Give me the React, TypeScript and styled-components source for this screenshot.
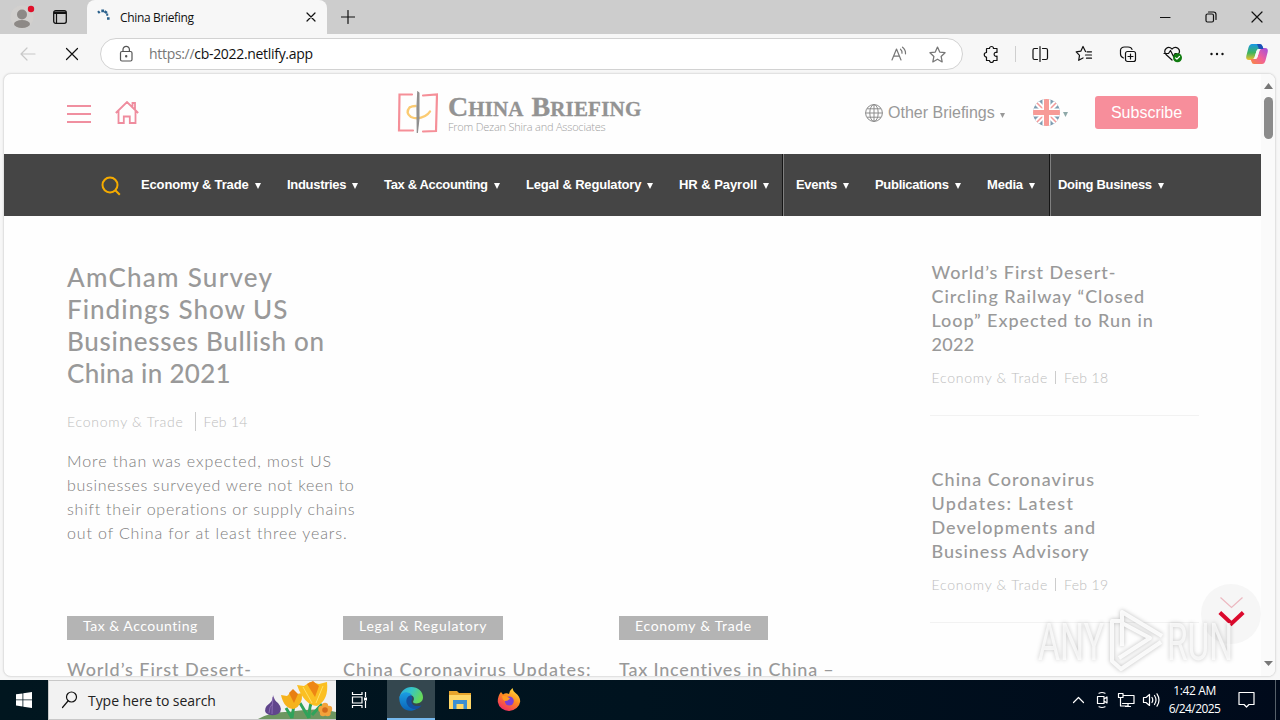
import React from "react";
import styled, { createGlobalStyle } from "styled-components";

const GlobalStyle = createGlobalStyle`
  * { box-sizing: border-box; }
  body { margin: 0; overflow: hidden; background: #f7f7f7; }
`;

const ui = `"Open Sans", "Noto Sans", sans-serif`;
const arial = `"Liberation Sans", Arial, sans-serif`;
const brown = `Lato, "Open Sans", sans-serif`;

const Screen = styled.div`
  position: relative;
  width: 1280px;
  height: 720px;
  display: flex;
  flex-direction: column;
  overflow: hidden;
  font-family: ${ui};
  color: #111;
  svg { display: block; flex: none; }
`;
const Line = styled.span<{ $track?: number }>`
  display: block;
  white-space: nowrap;
  letter-spacing: ${(p) => p.$track ?? 0}px;
`;

/* Browser frame */
const TabStrip = styled.header`
  height: 34px;
  flex: none;
  display: flex;
  background: #cdcdcd;
`;
const TabActions = styled.div`
  width: 87px;
  display: flex;
  align-items: center;
  gap: 18px;
  padding-left: 10px;
`;
const Tab = styled.div`
  width: 240px;
  display: flex;
  align-items: center;
  padding: 0 9px;
  background: #f7f7f7;
  border-radius: 8px 8px 0 0;
  font-size: 12px;
`;
const TabTitle = styled(Line)`
  flex: 1;
  padding-left: 8px;
`;
const NewTab = styled.div`
  display: flex;
  align-items: center;
  padding-left: 14px;
  flex: 1;
`;
const WindowButtons = styled.div`
  display: flex;
  align-items: center;
  gap: 34px;
  padding-right: 17px;
`;
const Toolbar = styled.div`
  height: 39px;
  flex: none;
  display: flex;
  align-items: center;
  padding: 1px 10px 0 18px;
  background: #f7f7f7;
`;
const NavButtons = styled.div`
  width: 82px;
  flex: none;
  display: flex;
  gap: 25px;
`;
const AddressBar = styled.div`
  width: 863px;
  flex: none;
  height: 32px;
  display: flex;
  align-items: center;
  padding: 0 16px 0 17px;
  background: #fff;
  border: 1px solid #d2d2d2;
  border-radius: 16px;
`;
const Url = styled(Line)`
  flex: 1;
  padding-left: 14px;
  font-size: 14px;
  line-height: 18px;
  color: #111;
`;
const Scheme = styled.span`
  color: #777;
`;
const AddressIcons = styled.div`
  display: flex;
  align-items: center;
  gap: 21px;
`;
const Tools = styled.div`
  flex: 1;
  min-width: 0;
  display: flex;
  align-items: center;
  gap: 26px;
  padding-left: 18px;
`;
const ToolDivider = styled.i`
  width: 1px;
  flex: none;
  height: 16px;
  margin: 0 -11px 0 -12px;
  background: #cfcfcf;
`;
const Copilot = styled.div`
  margin-left: -6px;
`;

/* Web page */
const Viewport = styled.main`
  width: 1273px;
  height: 604px;
  margin-left: 3px;
  flex: none;
  display: flex;
  overflow: hidden;
  background: #fefefe;
  border: 1px solid #e2e2e2;
  border-radius: 8px;
  box-shadow: 0 0 2px rgba(0, 0, 0, 0.1);
`;
const Page = styled.div`
  width: 1257px;
  flex: none;
`;
const SiteHeader = styled.div`
  height: 80px;
  display: flex;
  align-items: center;
  padding-left: 63px;
  font-family: ${arial};
`;
const MenuIcons = styled.div`
  width: 330px;
  display: flex;
  align-items: center;
  gap: 24px;
  padding-bottom: 2px;
`;
const Logo = styled.div`
  width: 468px;
  display: flex;
  gap: 10px;
  padding-bottom: 3px;
`;
const LogoText = styled.div`
  padding-top: 2px;
`;
const LogoName = styled.div`
  display: flex;
  gap: 8px;
  height: 27px;
  font: bold 21px/27px "Liberation Serif", "Times New Roman", serif;
  color: #939393;
  -webkit-text-stroke: 0.3px #939393;
`;
const Cap = styled.span`
  font-size: 28px;
  letter-spacing: 0;
`;
const LogoTag = styled(Line)`
  font: 300 11px/14px ${ui};
  color: #a0a0a0;
`;
const HeaderTools = styled.div`
  display: flex;
  align-items: center;
  padding-bottom: 3px;
`;
const Briefings = styled.div`
  width: 168px;
  display: flex;
  align-items: center;
  gap: 5px;
  font-size: 16px;
  color: #999;
`;
const Language = styled.div`
  width: 62px;
  display: flex;
  align-items: center;
  gap: 3px;
`;
const Subscribe = styled.button`
  width: 103px;
  height: 33px;
  padding: 0;
  border: 0;
  border-radius: 3px;
  background: #f78e9b;
  color: #fff;
  font: 16px ${arial};
`;
const NavBar = styled.nav`
  height: 62px;
  display: flex;
  padding-left: 97px;
  background: #454545;
  color: #fff;
  font: bold 13px ${arial};
`;
const SearchSlot = styled.div`
  width: 40px;
  padding-top: 22px;
`;
const NavItem = styled.div<{ $w: number }>`
  width: ${(p) => p.$w}px;
  display: flex;
  align-items: center;
  gap: 6px;
  height: 60px;
`;
const NavDivider = styled.i<{ $after: number }>`
  width: 2px;
  margin-right: ${(p) => p.$after}px;
  background: #151515;
  border-right: 1px solid #808080;
`;
const Content = styled.div`
  display: flex;
  padding: 45px 0 0 63px;
  font-family: ${brown};
`;
const MainColumn = styled.div`
  width: 863px;
`;
const Headline = styled.h1`
  margin: 0;
  font-size: 26px;
  line-height: 32px;
  font-weight: 500;
  color: #999;
`;
const Meta = styled.div`
  display: flex;
  align-items: center;
  height: 20px;
  font-size: 14px;
  font-weight: 300;
  color: #bdbdbd;
`;
const MetaBar = styled.i<{ $h: number; $gap: number }>`
  width: 1px;
  height: ${(p) => p.$h}px;
  margin: 0 8px 0 ${(p) => p.$gap}px;
  background: #ccc;
`;
const LeadMeta = styled.div`
  margin: 22px 0 18px;
`;
const Summary = styled.p`
  margin: 0;
  font-size: 16px;
  line-height: 24px;
  font-weight: 300;
  color: #7c7c7c;
`;
const Cards = styled.div`
  display: flex;
  margin-top: 71px;
`;
const Card = styled.article`
  width: 276px;
`;
const Tag = styled.div<{ $w: number }>`
  width: ${(p) => p.$w}px;
  height: 24px;
  padding-left: 16px;
  margin-bottom: 17px;
  background: #b4b4b4;
  color: #fff;
  font-size: 14px;
  line-height: 20px;
`;
const Title = styled.h2`
  margin: 0;
  padding-left: 1.5px;
  font-size: 18px;
  line-height: 24px;
  font-weight: 500;
  color: #999;
`;
const CardTitle = styled(Title)`
  padding-left: 0;
`;
const SideColumn = styled.aside`
  width: 269px;
  margin-top: -1px;
`;
const SideStory = styled.article`
  height: 156px;
  margin-bottom: 51px;
  border-bottom: 1px solid #f2f2f2;
`;
const SideMeta = styled.div`
  padding: 11px 0 0 1.5px;
`;
const Scrollbar = styled.div`
  width: 15px;
  flex: none;
  display: flex;
  flex-direction: column;
  align-items: center;
  justify-content: space-between;
  padding: 9px 0 10px;
  background: #fafafa;
`;
const Thumb = styled.div`
  width: 9px;
  height: 42px;
  margin: 8px 0 auto;
  border-radius: 5px;
  background: #8b8b8b;
`;

/* Overlays */
const ScrollHint = styled.div`
  position: absolute;
  left: 1201px;
  top: 584px;
  width: 60px;
  height: 60px;
  padding: 10px 0 0 16px;
  border-radius: 50%;
  background: #f6f6f6;
`;
const Watermark = styled.div`
  position: absolute;
  left: 1030px;
  top: 602px;
  filter: drop-shadow(0 0 2px rgba(0, 0, 0, 0.3));
`;

/* Taskbar */
const Taskbar = styled.footer`
  height: 40px;
  margin-top: auto;
  flex: none;
  display: flex;
  background: linear-gradient(90deg, #01161f, #00131f 50%, #000a1b);
  color: #fff;
`;
const TaskButton = styled.div<{ $active?: boolean }>`
  width: 48px;
  display: flex;
  align-items: center;
  justify-content: center;
  background: ${(p) => (p.$active ? "#34474f" : "transparent")};
  border-bottom: ${(p) => (p.$active ? "2px solid #76b9ed" : "0")};
`;
const PinnedApps = styled.div`
  display: flex;
  gap: 1px;
  padding-left: 3px;
`;
const SearchBox = styled.div`
  width: 288px;
  display: flex;
  align-items: center;
  padding-left: 12px;
  background: #f2f2f2;
  border: 1px solid #c8c8c8;
  border-width: 1px 0 1px 1px;
  color: #222;
  font-size: 14px;
`;
const SearchLabel = styled(Line)`
  flex: 1;
  padding-left: 10px;
`;
const Tray = styled.div`
  margin-left: auto;
  display: flex;
  align-items: center;
`;
const TrayIcons = styled.div`
  display: flex;
  align-items: center;
  gap: 7px;
  padding-right: 8px;
  margin-left: 1px;
`;
const Clock = styled.div`
  width: 53px;
  display: flex;
  flex-direction: column;
  align-items: center;
  font-size: 12px;
  line-height: 18px;
`;
const Notify = styled.div`
  width: 54px;
  height: 100%;
  padding: 11px 0 0 17px;
`;
const DesktopEdge = styled.i`
  width: 5px;
  height: 100%;
  border-left: 1px solid #56606a;
`;

const Caret = ({ s = 6, c = "#fff", drop = 4 }: { s?: number; c?: string; drop?: number }) => (
  <svg width={s} height={s + drop} viewBox={`0 0 ${s} ${s + drop}`} fill={c}>
    <path d={`M0 ${drop}h${s}L${s / 2} ${drop + s}z`} />
  </svg>
);

const stroke = { fill: "none", stroke: "#111", strokeWidth: 1.2, strokeLinecap: "round", strokeLinejoin: "round" } as const;

const starPath = "M8 1l2.1 4.7 5 .6-3.7 3.5 1 5.2L8 12.4 3.600 15l1-5.200L.9 6.300l5-.6z";

function BrowserTop() {
  return (
    <>
      <TabStrip>
        <TabActions>
          <svg width="25" height="24" viewBox="0 0 25 24">
            <circle cx="12" cy="12" r="11.500" fill="#d2d0ce" />
            <circle cx="12" cy="9.500" r="5" fill="#8d8986" />
            <ellipse cx="12" cy="19" rx="8" ry="4" fill="#8d8986" />
            <circle cx="21" cy="4" r="3.200" fill="#e0102a" />
          </svg>
          <svg width="14" height="14" viewBox="0 0 14 14">
            <rect x=".7" y=".7" width="12.600" height="12.600" rx="2" fill="none" stroke="#111" strokeWidth="1.300" />
            <path d="M1 1.500h12V4H1z" fill="#111" />
            <path d="M3.500 4v9" stroke="#111" strokeWidth="1.200" />
          </svg>
        </TabActions>
        <Tab>
          <svg width="16" height="16" viewBox="0 0 16 16" fill="none" stroke="#2b618c" strokeWidth="2.600">
            <path d="M2 3.800l1.700-1.400M5.300 1.900h2.800M8.500 2.200l2.400 1.900" />
            <path d="M10.200 5.600h2M11 9.500h2.600" strokeWidth="2.400" />
          </svg>
          <TabTitle $track={-0.34}>China Briefing</TabTitle>
          <svg width="14" height="14" viewBox="0 0 14 14" {...stroke}><path d="M3 3l8 8M11 3l-8 8" /></svg>
        </Tab>
        <NewTab>
          <svg width="14" height="14" viewBox="0 0 14 14" {...stroke}><path d="M7 .5v13M.5 7h13" /></svg>
        </NewTab>
        <WindowButtons>
          <svg width="11" height="11" viewBox="0 0 11 11" {...stroke}><path d="M0 5.500h10" /></svg>
          <svg width="12" height="12" viewBox="0 0 12 12" {...stroke}>
            <rect x="1" y="3" width="7.500" height="8" rx="1.500" /><path d="M3.500 1H8.500q2.500 0 2.500 2.500V8.500" />
          </svg>
          <svg width="12" height="12" viewBox="0 0 12 12" {...stroke}><path d="M1 1l10 10M11 1L1 11" /></svg>
        </WindowButtons>
      </TabStrip>
      <Toolbar>
        <NavButtons>
          <svg width="20" height="16" viewBox="0 0 20 16" {...stroke} stroke="#c8c8c8"><path d="M3 8h14M9 2L3 8l6 6" /></svg>
          <svg width="18" height="16" viewBox="0 0 18 16" {...stroke}><path d="M3.500 2.500l11 11M14.500 2.500l-11 11" /></svg>
        </NavButtons>
        <AddressBar>
          <svg width="17" height="18" viewBox="0 0 17 18" {...stroke} stroke="#555">
            <rect x="2.500" y="6.500" width="11.500" height="9.500" rx="1.500" /><path d="M5 6V4.500a3.200 3.200 0 016.400 0V6" />
            <circle cx="8.200" cy="11.200" r=".6" fill="#555" />
          </svg>
          <Url $track={-0.31}><Scheme>https://</Scheme>cb-2022.netlify.app</Url>
          <AddressIcons>
            <svg width="18" height="16" viewBox="0 0 18 16" {...stroke} stroke="#777">
              <path d="M2 14L6.500 3 11 14M3.500 10.200h6M10.500 3.200q1.800 1.600 1.500 4M12.500 1.200q3.300 2.600 3 6.600" />
            </svg>
            <svg width="17" height="17" viewBox="0 0 16 16" {...stroke} stroke="#777"><path d={starPath} /></svg>
          </AddressIcons>
        </AddressBar>
        <Tools>
          <svg width="20" height="18" viewBox="0 0 20 18" {...stroke}>
            <path d="M6 3.500h2.500a2 2 0 014 0H16V7.500a2 2 0 100 3.600V15.500H12.500a2 2 0 01-4 0H5.500V12a2.200 2.200 0 110-4.500V4z" />
          </svg>
          <ToolDivider />
          <svg width="18" height="18" viewBox="0 0 18 18" {...stroke}>
            <path d="M6.500 3.500H3.500a1.500 1.500 0 00-1.500 1.500v8a1.500 1.500 0 001.500 1.500H6.500M11.500 3.500H15a1.500 1.500 0 011.500 1.500v8a1.500 1.500 0 01-1.500 1.500H11.500M9 1.500v15" />
          </svg>
          <svg width="18" height="18" viewBox="0 0 18 18" {...stroke}>
            <path d="M10.500 6.500L8 1.500 5.800 6.200 1.200 6.800l3.300 3.500-.8 5L8 12.900M12 6.800h4.500M10.500 10h6M11.500 13.200h5" />
          </svg>
          <svg width="18" height="18" viewBox="0 0 18 18" {...stroke}>
            <rect x="6.500" y="6.500" width="10" height="10" rx="2" /><path d="M11.500 9v5M9 11.500h5M4.500 13Q1.500 12 1.500 9V5q.5-3 4-3H9q3.500 0 4 2.500" />
          </svg>
          <svg width="20" height="18" viewBox="0 0 20 18" {...stroke}>
            <path d="M9 15L3 9.500C-.5 5 5 0 9 4c4-4 9.500.5 6.500 5M1 8.500h4.500l2-3 3 6 1.500-3h2" />
            <circle cx="14.500" cy="12.700" r="4.500" fill="#107c10" stroke="none" /><path d="M12.500 12.800l1.400 1.400 2.600-2.700" stroke="#fff" />
          </svg>
          <svg width="16" height="4" viewBox="0 0 16 4" fill="#111"><circle cx="2.500" cy="2" r="1.200" /><circle cx="8" cy="2" r="1.200" /><circle cx="13.500" cy="2" r="1.200" /></svg>
          <Copilot>
            <svg width="24" height="24" viewBox="0 0 24 24">
              <defs>
                <linearGradient id="cpA" x1="0" y1="0" x2="0" y2="1"><stop stopColor="#1798e8" /><stop offset=".55" stopColor="#3fb45c" /><stop offset="1" stopColor="#f3c02e" /></linearGradient>
                <linearGradient id="cpB" x1="1" y1="0" x2="0" y2="1"><stop stopColor="#a04fe0" /><stop offset=".5" stopColor="#f0609a" /><stop offset="1" stopColor="#fa8a3c" /></linearGradient>
              </defs>
              <path d="M7 2h8q2 0 2.600 2.500L18.500 7H14q-2 0-2.500 2L9.500 15.500Q9 18 6.500 18H4Q.5 18 1.300 14L3.500 5.500Q4.500 2 7 2z" fill="url(#cpA)" />
              <path d="M17 22H9q-2 0-2.600-2.500L5.500 17H10q2 0 2.500-2l2-6.500Q15 6 17.500 6H20q3.500 0 2.700 4l-2.200 8.500Q19.500 22 17 22z" fill="url(#cpB)" />
              <path d="M11.500 9q.5-2 2.500-2h2.300q-1.200.3-1.800 1.500l-2 6.500q-.5 2-2.500 2H7.700q1.300-.3 1.800-1.500z" fill="#f7f7f7" />
              <path d="M12 2h3q2 0 2.600 2.500L18.500 7H14z" fill="#1d4fb8" />
            </svg>
          </Copilot>
        </Tools>
      </Toolbar>
    </>
  );
}

const navGroups: [string, number, number][][] = [
  [["Economy & Trade", 146, -0.15], ["Industries", 97, -0.3], ["Tax & Accounting", 142, -0.34], ["Legal & Regulatory", 153, -0.18], ["HR & Payroll", 103, -0.05]],
  [["Events", 79, -0.3], ["Publications", 112, -0.3], ["Media", 62, -0.2]],
  [["Doing Business", 120, -0.32]],
];

function Header() {
  return (
    <>
      <SiteHeader>
        <MenuIcons>
          <svg width="24" height="20" viewBox="0 -1 24 20" stroke="#f08fa0" strokeWidth="2"><path d="M0 2h24M0 10h24M0 18h24" /></svg>
          <svg width="24" height="24" viewBox="0 .5 24 24" fill="none" stroke="#ef8c9e" strokeWidth="1.800">
            <path d="M.8 12.500L12 1.500l11.200 11M3.500 10v12.500h5.300V16h6v6.500h5.700V10M17.500 6V2.500h2.500V9" />
          </svg>
        </MenuIcons>
        <Logo>
          <svg width="41" height="44" viewBox="-1 0 41 44" fill="none" strokeLinecap="round">
            <path d="M14 3.500H1.500L1 39.500h14M25 4.500l14-1-1 36.500-13 .5" stroke="#f58f98" strokeWidth="2.200" />
            <path d="M11.500 16.500Q7 22 13 26 20 29 27 25q3.500-2 5-4.500M11.500 16.500q2.500-1.500 6-1.500" stroke="#fbcb72" strokeWidth="2.400" />
            <path d="M19.800 1l-.8 15 .3 26 1.600-14V2z" stroke="#8e8e8e" strokeWidth="1.200" fill="#8e8e8e" />
          </svg>
          <LogoText>
            <LogoName><Line $track={0.1}><Cap>C</Cap>HINA</Line><Line $track={0.2}><Cap>B</Cap>RIEFING</Line></LogoName>
            <LogoTag $track={-0.22}>From Dezan Shira and Associates</LogoTag>
          </LogoText>
        </Logo>
        <HeaderTools>
          <Briefings>
            <svg width="18" height="18" viewBox="0 0 18 18" fill="none" stroke="#8c8c8c" strokeWidth="1">
              <circle cx="9" cy="9" r="8.400" /><ellipse cx="9" cy="9" rx="4.200" ry="8.400" /><path d="M9 .6v16.800M.6 9h16.800M2 4.800h14M2 13.200h14" />
            </svg>
            <Line>Other Briefings</Line>
            <Caret s={5} c="#999" drop={6} />
          </Briefings>
          <Language>
            <svg width="27" height="27" viewBox="0 0 27 27">
              <defs><clipPath id="flag"><circle cx="13.500" cy="13.500" r="13.500" /></clipPath></defs>
              <g clipPath="url(#flag)">
                <path fill="#7f9db2" d="M0 0h27v27H0z" />
                <path d="M0 0l27 27M27 0L0 27" stroke="#fff" strokeWidth="5.500" /><path d="M0 0l27 27M27 0L0 27" stroke="#f59a9a" strokeWidth="1.500" />
                <path d="M13.500 0v27M0 13.500h27" stroke="#fff" strokeWidth="8" /><path d="M13.500 0v27M0 13.500h27" stroke="#f79a96" strokeWidth="5" />
              </g>
            </svg>
            <Caret s={5} c="#8fa9a9" drop={3} />
          </Language>
          <Subscribe>Subscribe</Subscribe>
        </HeaderTools>
      </SiteHeader>
      <NavBar>
        <SearchSlot>
          <svg width="20" height="20" viewBox="0 0 20 20" fill="none" stroke="#f5ab00" strokeWidth="2"><circle cx="9" cy="9" r="7.500" /><path d="M14.300 14.300l4.500 4.500" /></svg>
        </SearchSlot>
        {navGroups.map((group, g) => (
          <React.Fragment key={g}>
            {g > 0 && <NavDivider $after={g === 1 ? 12 : 7} />}
            {group.map(([label, w, track]) => (
              <NavItem key={label} $w={w}><Line $track={track}>{label}</Line><Caret /></NavItem>
            ))}
          </React.Fragment>
        ))}
      </NavBar>
    </>
  );
}

const lead: [string, number][] = [["AmCham Survey", 1.27], ["Findings Show US", 1], ["Businesses Bullish on", 0.7], ["China in 2021", 0.3]];
const summary: [string, number][] = [
  ["More than was expected, most US", 0.92], ["businesses surveyed were not keen to", 0.72],
  ["shift their operations or supply chains", 0.78], ["out of China for at least three years.", 0.87],
];
const cards: [string, number, number, string, number][] = [
  ["Tax & Accounting", 147, 0.51, "World’s First Desert-", 0.95],
  ["Legal & Regulatory", 160, 0.74, "China Coronavirus Updates:", 1.07],
  ["Economy & Trade", 149, 0.67, "Tax Incentives in China –", 0.8],
];
const side: { lines: [string, number][]; date: string }[] = [
  { lines: [["World’s First Desert-", 0.95], ["Circling Railway “Closed", 0.99], ["Loop” Expected to Run in", 0.94], ["2022", 0.3]], date: "Feb 18" },
  { lines: [["China Coronavirus", 1.05], ["Updates: Latest", 1.28], ["Developments and", 1], ["Business Advisory", 0.89]], date: "Feb 19" },
];

function News() {
  return (
    <Content>
      <MainColumn>
        <Headline>{lead.map(([t, k]) => <Line key={t} $track={k}>{t}</Line>)}</Headline>
        <LeadMeta>
          <Meta><Line $track={0.75}>Economy &amp; Trade</Line><MetaBar $h={19} $gap={11} /><Line $track={0.3}>Feb 14</Line></Meta>
        </LeadMeta>
        <Summary>{summary.map(([t, k]) => <Line key={t} $track={k}>{t}</Line>)}</Summary>
        <Cards>
          {cards.map(([tag, w, tk, title, k]) => (
            <Card key={tag}><Tag $w={w}><Line $track={tk}>{tag}</Line></Tag><CardTitle><Line $track={k}>{title}</Line></CardTitle></Card>
          ))}
        </Cards>
      </MainColumn>
      <SideColumn>
        {side.map((s) => (
          <SideStory key={s.date}>
            <Title>{s.lines.map(([t, k]) => <Line key={t} $track={k}>{t}</Line>)}</Title>
            <SideMeta><Meta><Line $track={0.75}>Economy &amp; Trade</Line><MetaBar $h={13} $gap={7} /><Line $track={0.33}>{s.date}</Line></Meta></SideMeta>
          </SideStory>
        ))}
      </SideColumn>
    </Content>
  );
}

function Tulips() {
  return (
    <svg width="78" height="38" viewBox="0 0 78 38">
      <path d="M0 38Q14 30 30 31q30-5 48 0v7z" fill="#6d9660" />
      <path d="M34 37l-6-10M34 37q2-14 3-18M51 37q0-14 5-20M51 37L42 22M54 34l10-11" stroke="#2fa35a" strokeWidth="3" fill="none" />
      <path d="M15 14q1 5 5 8 6 7 0 11-7 3-12-1-3-5 4-10 3-3 3-8z" fill="#60458c" /><path d="M15 16q-1 10-1 17M15 22q-4 4-4 10" stroke="#8a6cb2" fill="none" />
      <path d="M23 14l6 1 5-5 5 3 5-1q1 12-8 16-10 0-13-14z" fill="#f6b21c" /><path d="M31 12l4-4 5 5-4 9z" fill="#e87f12" />
      <path d="M39 4l7 1 6-4 9 2 8-2q2 18-10 24-13-1-20-21z" fill="#fbbf22" /><path d="M49 3l6-3 6 5-4 11z" fill="#ee8614" /><path d="M45 6l9 16M65 5l-7 17" stroke="#ffe066" fill="none" />
      <circle cx="67" cy="25" r="3.200" fill="#f2a23a" /><circle cx="63.500" cy="28" r="3.200" fill="#f2a23a" /><circle cx="71" cy="28" r="3.200" fill="#f2a23a" /><circle cx="65" cy="32" r="3.200" fill="#f2a23a" /><circle cx="69.500" cy="32" r="3.200" fill="#f2a23a" />
      <circle cx="67" cy="29" r="2.800" fill="#d36b1a" />
    </svg>
  );
}

function Bottom() {
  const tray = { ...stroke, stroke: "#fff" };
  return (
    <Taskbar>
      <TaskButton>
        <svg width="16" height="16" viewBox="0 0 16 16" fill="#fff"><path d="M0 2.300L6.500 1.400V7.500H0zM7.300 1.300L16 0v7.500H7.300zM0 8.300h6.500v6.200L0 13.600zM7.300 8.300H16V16l-8.700-1.300z" /></svg>
      </TaskButton>
      <SearchBox>
        <svg width="17" height="18" viewBox="0 0 17 18" {...stroke}><circle cx="10.500" cy="6" r="5" /><path d="M7 10l-5.500 6.500" /></svg>
        <SearchLabel $track={-0.05}>Type here to search</SearchLabel>
        <Tulips />
      </SearchBox>
      <TaskButton>
        <svg width="18" height="16" viewBox="0 0 18 16" fill="none" stroke="#fff" strokeWidth="1.200">
          <path d="M1.500 0v2.500h9.500V0M1.500 5h9.500v6H1.500zM1.500 16v-2.500h9.500V16M14.500 0v5M14.500 9v7" /><path d="M13 5.500h3v3h-3z" fill="#fff" stroke="none" />
        </svg>
      </TaskButton>
      <PinnedApps>
        <TaskButton $active>
          <svg width="24" height="24" viewBox="0 0 24 24">
            <defs>
              <linearGradient id="eTop" x1="0" y1="0" x2="1" y2=".4"><stop stopColor="#2aa6df" /><stop offset=".5" stopColor="#35c5c8" /><stop offset="1" stopColor="#66d95a" /></linearGradient>
              <linearGradient id="eLow" x1="0" y1="0" x2="0" y2="1"><stop stopColor="#1b9de2" /><stop offset="1" stopColor="#0b63b8" /></linearGradient>
            </defs>
            <path d="M.5 11C1.500 4 6.500 0 12.300 0 19 0 24 4.800 24 10.300c0 4-3 6.200-6.500 6.200-3 0-4-1.500-3.200-2.500 1.400-2 .7-5.800-3.500-6C6 7.500 1.500 8.500.5 11z" fill="url(#eTop)" />
            <path d="M.3 12C0 7 4.800 4.800 8.500 5.500c3 .5 4.500 2.500 4.500 2.500-3 .5-5 3.500-4.500 7 .6 5 5.500 7 9 6.700C12 26 1 24 .3 12z" fill="url(#eLow)" />
            <path d="M11.200 8.500c-3.500 1-4.700 5-3.200 8.500 1.700 4 6 5.700 9.500 5 2.500-.6 4-2 5-3.800-3.500 1.600-8 .9-9.500-1.800-1.200-2-.3-3.600.3-4.600.3-1.600-.5-3-2.100-3.300z" fill="#1450a0" />
          </svg>
        </TaskButton>
        <TaskButton>
          <svg width="22" height="20" viewBox="0 0 22 20"><path d="M0 1h8l2 2h12v16H0z" fill="#e8a52c" /><path d="M0 5h22v14H0z" fill="#ffd768" /><path d="M4 10h14v9h-3.500v-5h-7v5H4z" fill="#3b8fd4" /></svg>
        </TaskButton>
        <TaskButton>
          <svg width="24" height="24" viewBox="0 0 24 24">
            <defs><linearGradient id="ff" x1=".8" y1="0" x2=".2" y2="1"><stop stopColor="#ffe23d" /><stop offset=".45" stopColor="#ff8a1e" /><stop offset="1" stopColor="#f0256a" /></linearGradient></defs>
            <path d="M4 4l2 2.500Q9 4.500 12 6q1-4 3.500-6 .5 3.500 3 5 4.500 3 4.700 8.500A11.300 10.500 0 01.8 14Q.6 8 4 4z" fill="url(#ff)" />
            <circle cx="12.300" cy="13" r="4.500" fill="#7a3fd6" /><path d="M5 8q4-.8 8 2.500-2.500 3-5.500 2.500Q5 11 5 8z" fill="#ff9a20" />
          </svg>
        </TaskButton>
      </PinnedApps>
      <Tray>
        <TrayIcons>
          <svg width="15" height="16" viewBox="0 0 15 16" {...tray}><path d="M2.500 10.500l5-5 5 5" /></svg>
          <svg width="17" height="18" viewBox="0 0 17 18" {...tray}><path d="M6 2.200Q9 .8 12 2.200M6 15.800q3 1.400 6 0M4.500 5.500h6.500v7H4.500zM11 8l3-2v6l-3-2" /></svg>
          <svg width="18" height="16" viewBox="0 0 18 16" {...tray}><path d="M6 3.500h11v8H5.500M1.500 1.500h4.500v4H1.500zM3.500 5.500v8.500h8M11 11.500V14.500M8.500 14.500h5" /></svg>
          <svg width="18" height="16" viewBox="0 0 18 16" {...tray}><path d="M1.500 5.500h2.500L7.500 2.500v11L4 10.500H1.500zM10 5.500q1.500 2.500 0 5M12.500 3.500q3 4.500 0 9M15 1.800q4 6.200 0 12.400" /></svg>
        </TrayIcons>
        <Clock><Line $track={-0.37}>1:42 AM</Line><Line $track={-0.6}>6/24/2025</Line></Clock>
        <Notify>
          <svg width="17" height="18" viewBox="0 0 17 18" {...tray}><path d="M1 1.500h15v12h-5L8.500 16 6 13.500H1z" /></svg>
        </Notify>
        <DesktopEdge />
      </Tray>
    </Taskbar>
  );
}

export default function App() {
  return (
    <Screen>
      <GlobalStyle />
      <BrowserTop />
      <Viewport>
        <Page><Header /><News /></Page>
        <Scrollbar>
          <svg width="9" height="6" viewBox="0 0 9 6" fill="#777"><path d="M0 6L4.500 0 9 6z" /></svg>
          <Thumb />
          <svg width="9" height="5" viewBox="0 0 9 5" fill="#777"><path d="M0 0h9L4.500 5z" /></svg>
        </Scrollbar>
      </Viewport>
      <Bottom />
      <ScrollHint>
        <svg width="28" height="34" viewBox="0 0 28 34" fill="none">
          <path d="M3.500 3.500l11 10 11-10" stroke="#ecb8c0" strokeWidth="1.200" /><path d="M2.800 18.500l11.700 11L26.200 18.500" stroke="#dc0a2d" strokeWidth="4" />
        </svg>
      </ScrollHint>
      <Watermark>
        <svg width="210" height="74" viewBox="0 0 210 74">
          <g fill="#fff" fillOpacity=".7" fontFamily="Roboto, sans-serif" fontSize="51" fontWeight="400">
            <text x="8" y="58" textLength="66" lengthAdjust="spacingAndGlyphs">ANY</text>
            <text x="137" y="58" textLength="66" lengthAdjust="spacingAndGlyphs">RUN</text>
          </g>
          <g fill="none" stroke="#fff" strokeOpacity=".85" strokeWidth="4" strokeLinejoin="round">
            <path d="M90 19h-8v40l9 8 40-27M92 44V10l40 24M92 21l28 15-31 20" />
          </g>
        </svg>
      </Watermark>
    </Screen>
  );
}
